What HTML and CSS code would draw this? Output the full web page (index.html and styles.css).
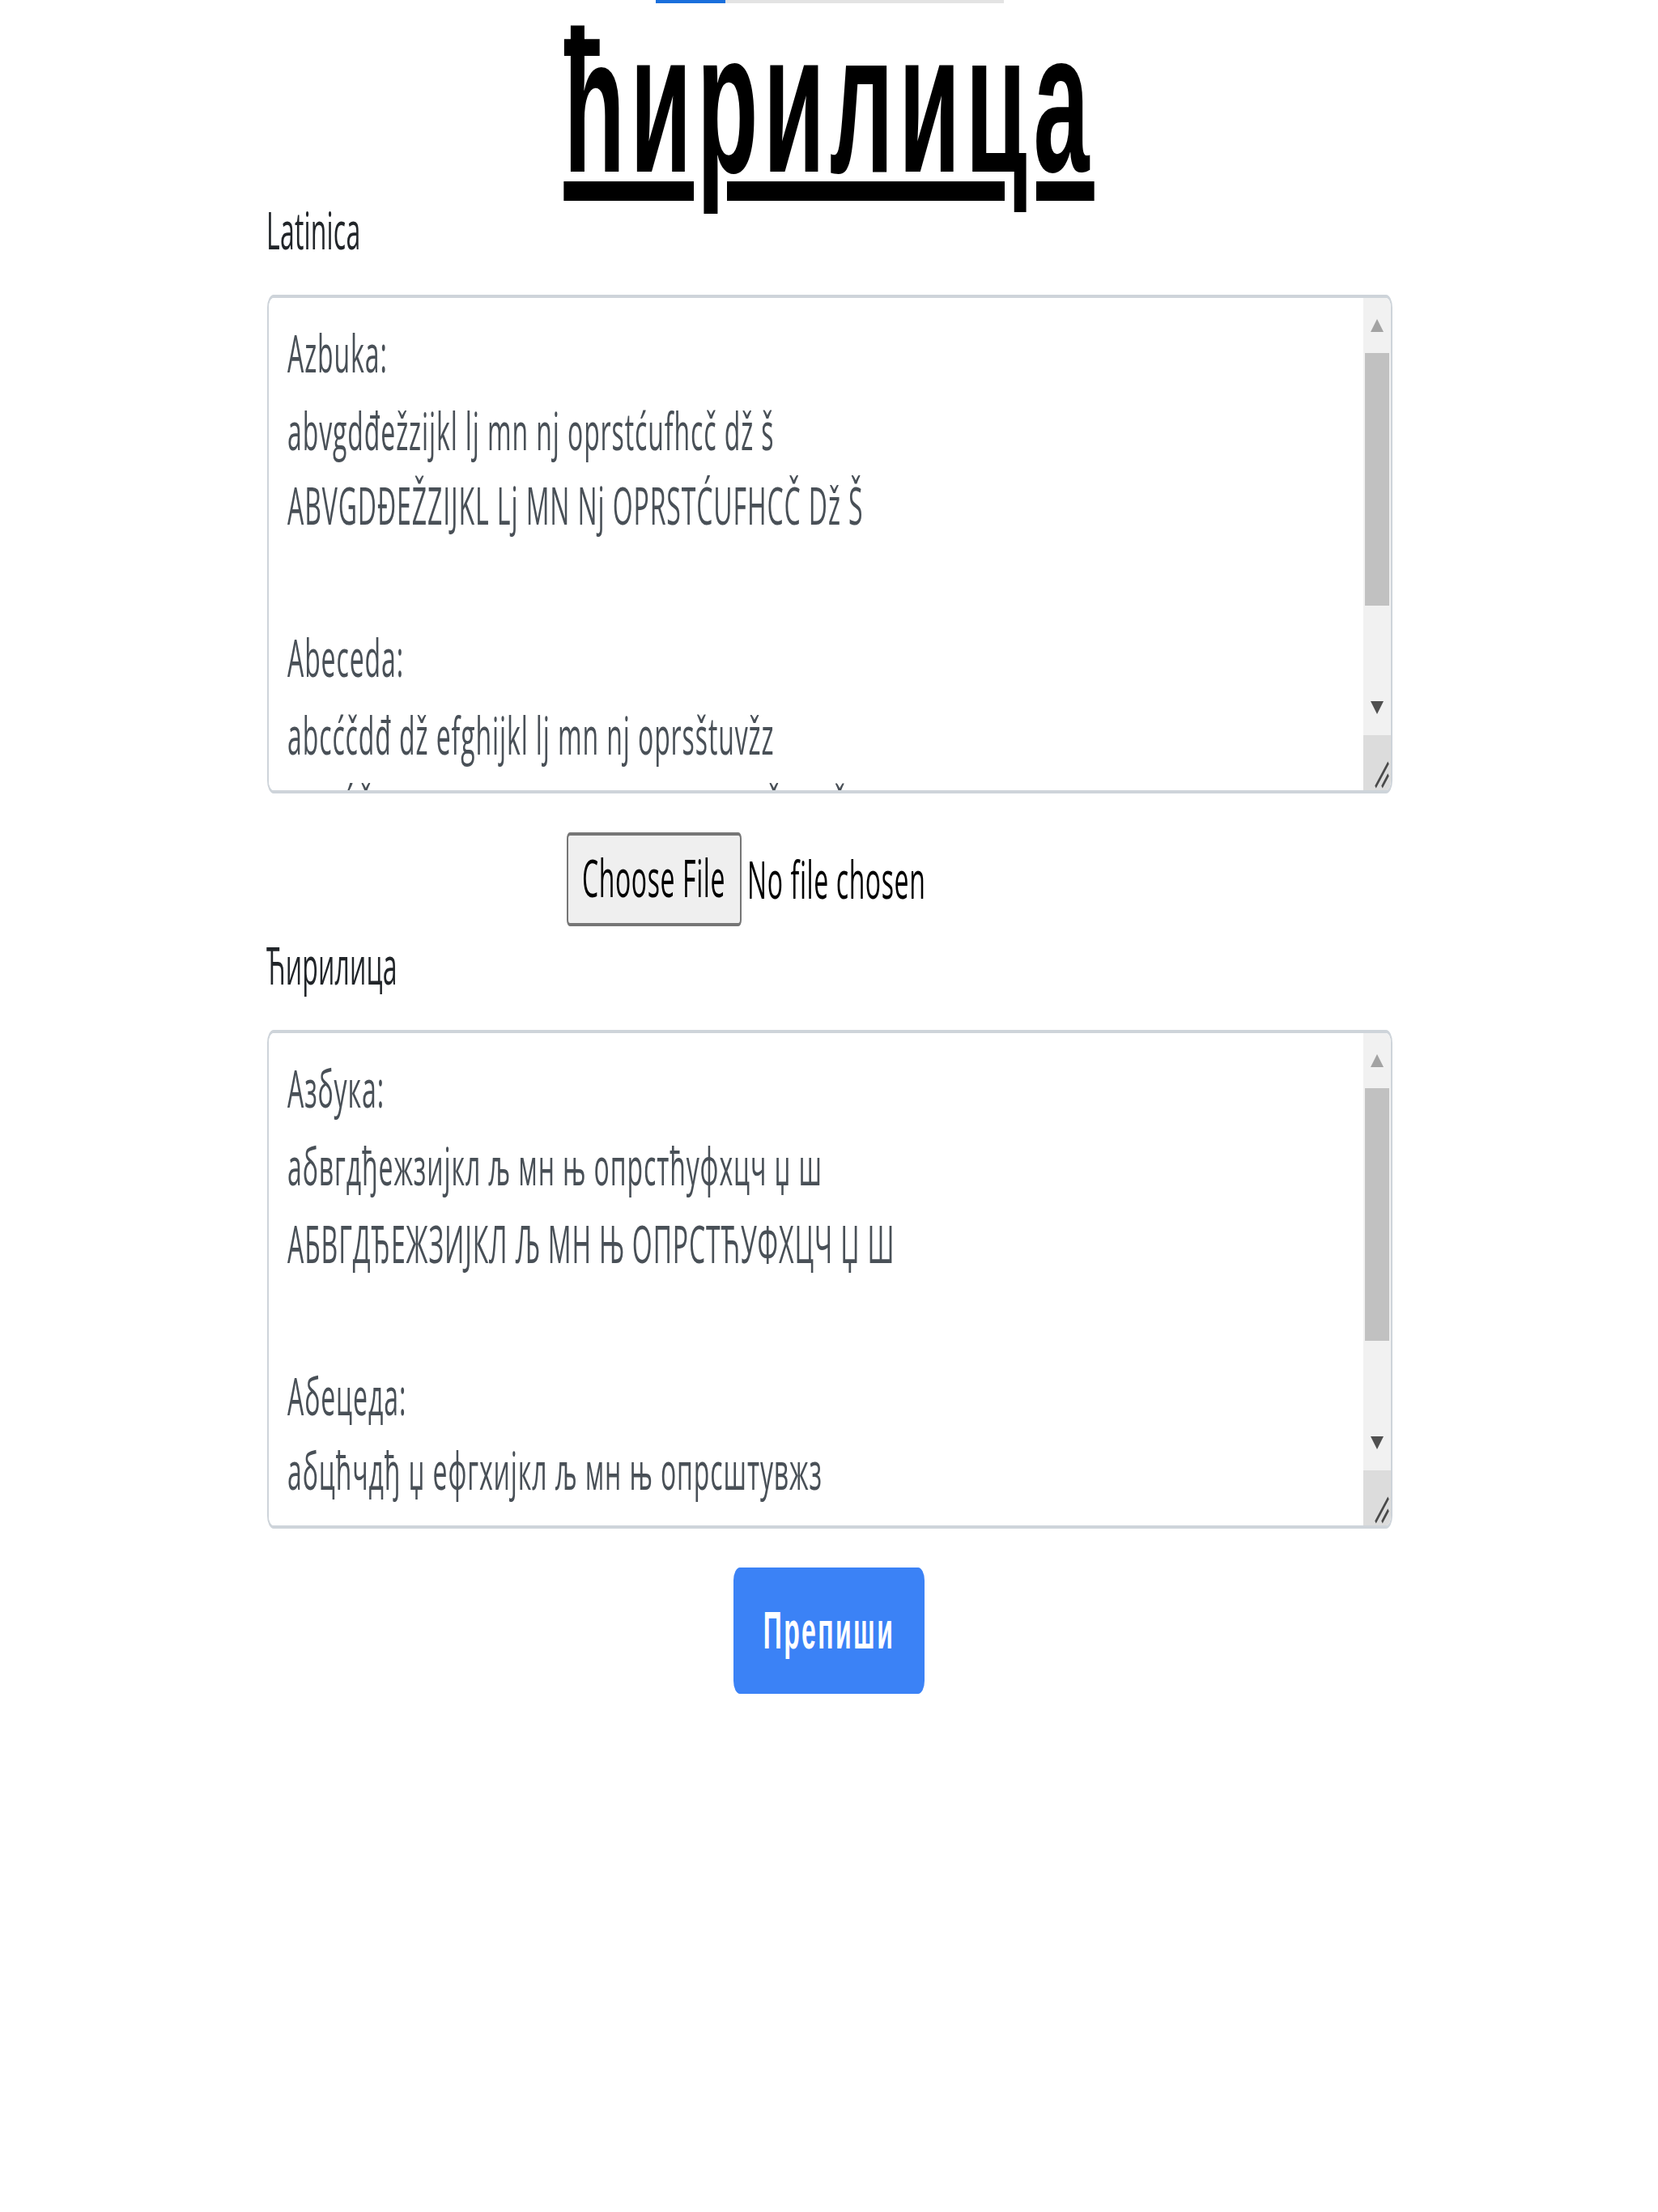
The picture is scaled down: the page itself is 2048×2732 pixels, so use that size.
FILE: index.html
```html
<!DOCTYPE html>
<html lang="sr">
<head>
<meta charset="utf-8">
<title>Ћирилица</title>
<link rel="stylesheet" href="styles.css">
</head>
<body>
<div class="stage">
  <div class="loadbar"><div class="loadbar-fill"></div></div>
  <main class="page">
    <h1 class="title">ћирилица</h1>
    <section class="field">
      <label class="field-label" for="latinica">Latinica</label>
      <div class="field-box">
        <textarea id="latinica" class="field-input">
Azbuka:
abvgdđežzijkl lj mn nj oprstćufhcč dž š
ABVGDĐEŽZIJKL Lj MN Nj OPRSTĆUFHCČ Dž Š

Abeceda:
abcćčdđ dž efghijkl lj mn nj oprsštuvžz
ABCĆČDĐ Dž EFGHIJKL Lj MN Nj OPRSŠTUVŽZ
</textarea>
        <div class="vscroll" aria-hidden="true">
          <div class="vscroll-btn"><svg width="17" height="17" viewBox="0 0 17 17"><path d="M4.5 10.5h8L8.5 6.5z" fill="#a3a3a3"/></svg></div>
          <div class="vscroll-track"><div class="vscroll-thumb"></div></div>
          <div class="vscroll-btn"><svg width="17" height="17" viewBox="0 0 17 17"><path d="M4.5 6.5h8L8.5 10.5z" fill="#505050"/></svg></div>
          <div class="vscroll-corner"><svg width="17" height="17" viewBox="0 0 17 17"><path d="M7.5 16L15.5 8.5M11.5 16L15.5 12.2" stroke="#4a4a4a" stroke-width="1.1" fill="none"/></svg></div>
        </div>
      </div>
    </section>
    <div class="upload"><input type="file" class="upload-input"></div>
    <section class="field">
      <label class="field-label" for="cirilica">Ћирилица</label>
      <div class="field-box">
        <textarea id="cirilica" class="field-input">
Азбука:
абвгдђежзијкл љ мн њ опрстћуфхцч џ ш
АБВГДЂЕЖЗИЈКЛ Љ МН Њ ОПРСТЋУФХЦЧ Џ Ш

Абецеда:
абцћчдђ џ ефгхијкл љ мн њ опрсштувжз
АБЦЋЧДЂ Џ ЕФГХИЈКЛ Љ МН Њ ОПРСШТУВЖЗ
</textarea>
        <div class="vscroll" aria-hidden="true">
          <div class="vscroll-btn"><svg width="17" height="17" viewBox="0 0 17 17"><path d="M4.5 10.5h8L8.5 6.5z" fill="#a3a3a3"/></svg></div>
          <div class="vscroll-track"><div class="vscroll-thumb"></div></div>
          <div class="vscroll-btn"><svg width="17" height="17" viewBox="0 0 17 17"><path d="M4.5 6.5h8L8.5 10.5z" fill="#505050"/></svg></div>
          <div class="vscroll-corner"><svg width="17" height="17" viewBox="0 0 17 17"><path d="M7.5 16L15.5 8.5M11.5 16L15.5 12.2" stroke="#4a4a4a" stroke-width="1.1" fill="none"/></svg></div>
        </div>
      </div>
    </section>
    <div class="actions"><button type="button" class="btn-primary">Препиши</button></div>
  </main>
</div>
</body>
</html>
```

FILE: styles.css
```css
html {
  margin: 0;
  padding: 0;
  background: #fff;
  overflow: hidden;
}

body {
  margin: 0;
  padding: 0;
  min-height: 2732px;
  background: #fff;
}

.stage {
  width: 1024px;
  height: 683px;
  transform: scale(2, 4);
  transform-origin: 0 0;
  font-family: "Open Sans", "Noto Sans", sans-serif;
  font-size: 16px;
  line-height: 24px;
  color: #212529;
}

.loadbar {
  width: 215px;
  height: 0.75px;
  margin: 0 auto;
  background: #e3e3e3;
  display: flex;
}

.loadbar-fill {
  width: 20%;
  background: #1a6fdc;
}

.page {
  width: 695px;
  margin: 0 auto;
  display: flex;
  flex-direction: column;
}

.title {
  margin: -3.63px 0 -8.62px;
  padding: 0;
  font-family: "Liberation Sans", Arial, sans-serif;
  font-weight: 700;
  font-size: 62px;
  line-height: 70px;
  letter-spacing: 3.1px;
  color: #000;
  text-align: center;
  text-decoration: underline;
  text-decoration-thickness: 5.6px;
  text-underline-offset: 3.3px;
}

.field {
  display: flex;
  flex-direction: column;
}

.field-label {
  display: block;
  margin-bottom: 8px;
  letter-spacing: 0.1px;
}

.field-box {
  box-sizing: border-box;
  display: flex;
  height: 154.3px;
  border: 1px solid #ced4da;
  border-radius: 4px;
  overflow: hidden;
  background: #fff;
}

.field-input {
  flex: 1;
  min-width: 0;
  margin: 0;
  padding: 6.6px 12px 6px;
  border: 0;
  outline: none;
  resize: none;
  overflow: hidden;
  font-family: inherit;
  font-size: 16px;
  line-height: 23.6px;
  letter-spacing: 0.45px;
  color: #495057;
  background: #fff;
}

.vscroll {
  width: 17px;
  flex: none;
  display: flex;
  flex-direction: column;
  background: #f1f1f1;
}

.vscroll-btn {
  height: 17px;
  flex: none;
  display: flex;
}

.vscroll-btn svg,
.vscroll-corner svg {
  display: block;
}

.vscroll-track {
  flex: 1;
  padding: 0 1px;
}

.vscroll-thumb {
  height: 78px;
  background: #c1c1c1;
}

.vscroll-corner {
  height: 17px;
  flex: none;
  background: #dcdcdc;
}

.upload {
  display: flex;
  height: 29px;
  margin-top: 12px;
  padding-left: 185.5px;
}

.upload-input {
  font-family: inherit;
  font-size: 16px;
  line-height: 24px;
  letter-spacing: 0.3px;
  color: #000;
}

.upload-input::file-selector-button {
  margin: 0 4px 0 0;
  padding: 1.5px 8.5px;
  border: 1px solid #767676;
  border-radius: 2px;
  background: #efefef;
  color: #000;
  font: inherit;
  letter-spacing: inherit;
}

.actions {
  display: flex;
  justify-content: center;
  margin-top: 12.2px;
}

.btn-primary {
  box-sizing: border-box;
  height: 39.2px;
  padding: 0 18px;
  border: 0;
  border-radius: 4px;
  background: #3b82f6;
  color: #fff;
  font-family: "Liberation Sans", Arial, sans-serif;
  font-weight: 700;
  font-size: 16px;
  line-height: 24px;
  letter-spacing: 1.2px;
}
```
